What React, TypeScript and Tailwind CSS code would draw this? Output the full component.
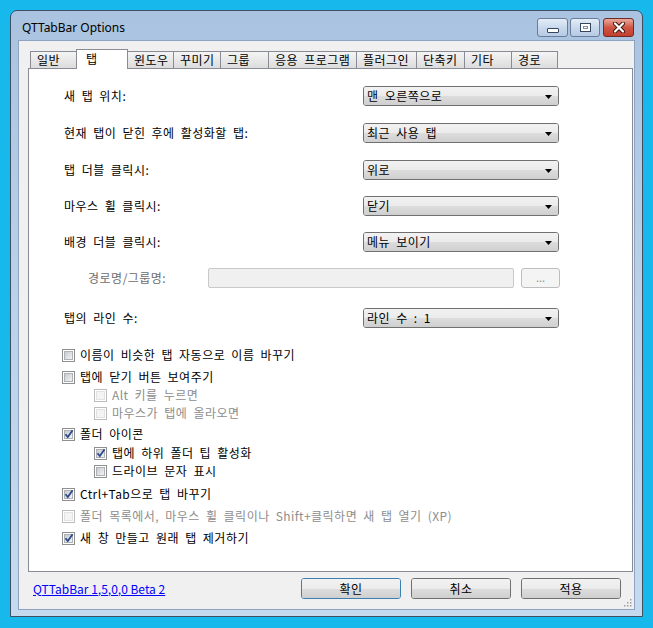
import React from "react"

const FONT = { fontFamily: '"Noto Sans CJK KR", "Noto Sans", sans-serif' }

const tabs: [string, number][] = [
  ["일반", 47],
  ["탭", 52],
  ["윈도우", 47],
  ["꾸미기", 48],
  ["그룹", 49],
  ["응용 프로그램", 89],
  ["플러그인", 61],
  ["단축키", 49],
  ["기타", 48],
  ["경로", 47],
]

// Gulim-like spacing: hangul runs get a little tracking, ascii runs keep wide spaces
function K({ text }: { text: string }) {
  const parts = text.split(/([\x00-\x7f]+)/).filter((p) => p !== "")
  return (
    <>
      {parts.map((p, i) =>
        /^[\x00-\x7f]+$/.test(p) ? (
          <span key={i} className="tracking-[0.4px]" style={{ wordSpacing: "3px" }}>
            {p}
          </span>
        ) : (
          <span key={i} className="tracking-[0.5px]">
            {p}
          </span>
        )
      )}
    </>
  )
}

function Combo({ value }: { value: string }) {
  return (
    <div className="relative flex h-[20px] w-[196px] items-center overflow-hidden rounded-[3px] border border-[#707070] pl-[3px] text-[12px] leading-none text-black">
      <div className="absolute inset-0 flex flex-col">
        <div className="flex-1 bg-gradient-to-b from-[#f2f2f2] to-[#ebebeb]" />
        <div className="flex-1 bg-gradient-to-b from-[#dddddd] to-[#cfcfcf]" />
      </div>
      <span className="relative">
        <K text={value} />
      </span>
      <svg className="absolute right-[6px] top-[8px]" width="7" height="4" viewBox="0 0 7 4">
        <path d="M0 0H7L3.5 4Z" fill="#000" />
      </svg>
    </div>
  )
}

function SettingRow({ label, value, mt }: { label: string; value: string; mt: string }) {
  return (
    <div className={`flex h-[20px] items-center pl-[35px] ${mt}`}>
      <div className="w-[299px] text-[12px] text-black">
        <K text={label} />
      </div>
      <Combo value={value} />
    </div>
  )
}

function Check({
  label,
  checked = false,
  disabled = false,
  indent = false,
  mt,
}: {
  label: string
  checked?: boolean
  disabled?: boolean
  indent?: boolean
  mt: string
}) {
  return (
    <div className={`flex h-[18px] items-center gap-[5px] ${indent ? "pl-[65px]" : "pl-[33px]"} ${mt}`}>
      <div
        className={`flex h-[13px] w-[13px] items-center justify-center border bg-white ${
          disabled ? "border-[#bcbcbc]" : "border-[#8f8f8f]"
        }`}
      >
        <div
          className={`relative h-[9px] w-[9px] ${
            disabled
              ? "bg-[#f4f4f4] border border-[#e2e2e2]"
              : "border border-[#aeb2b7] bg-gradient-to-br from-[#c9cbcf] to-[#f3f3f3]"
          }`}
        >
          {checked && (
            <svg className="absolute -left-[1px] -top-[2px]" width="10" height="10" viewBox="0 0 10 10">
              <path d="M1.5 5.2L3.8 8L8.6 1.2" stroke="#2c4a8c" strokeWidth="1.8" fill="none" />
            </svg>
          )}
        </div>
      </div>
      <span className={`whitespace-nowrap text-[12px] ${disabled ? "text-[#8d8d8d]" : "text-black"}`}>
        <K text={label} />
      </span>
    </div>
  )
}

function WinButton({ label, primary = false }: { label: string; primary?: boolean }) {
  return (
    <div
      className={`relative flex h-[21px] w-[100px] items-center justify-center overflow-hidden rounded-[3px] border text-[12px] text-black ${
        primary ? "border-[#3c7fb1]" : "border-[#707070]"
      }`}
    >
      <div className="absolute inset-0 flex flex-col">
        <div className="flex-1 bg-gradient-to-b from-[#f2f2f2] to-[#ebebeb]" />
        <div className="flex-1 bg-gradient-to-b from-[#dddddd] to-[#cfcfcf]" />
      </div>
      <span className="relative">
        <K text={label} />
      </span>
    </div>
  )
}

export default function App() {
  return (
    <div className="h-[628px] w-[653px] bg-[#17b8ec] pl-[10px] pt-[10px]" style={FONT}>
      <div className="flex h-[607px] w-[633px] flex-col rounded-t-[7px] border border-[#3f4e61] bg-gradient-to-b from-[#a9c3e0] via-[#bcd2ea] to-[#c6daef] px-[7px] pb-[6px]">
        {/* title bar */}
        <div className="flex h-[29px] items-start justify-between">
          <div
            className="pl-[4px] pt-[9px] text-[12px] leading-[16px] text-black"
            style={{ fontFamily: '"Noto Sans", "Open Sans", sans-serif' }}
          >
            QTTabBar Options
          </div>
          <div className="mr-[1px] flex pt-[7px]">
            <div className="flex h-[19px] w-[31px] items-center justify-center rounded-[3px] border border-[#6a7d98] bg-gradient-to-b from-[#e4edf7] via-[#c9d9ec] to-[#b5cae4]">
              <div className="mt-[5px] h-[5px] w-[12px] rounded-[1px] border border-[#35465e] bg-white" />
            </div>
            <div className="ml-[2px] flex h-[19px] w-[30px] items-center justify-center rounded-[3px] border border-[#6a7d98] bg-gradient-to-b from-[#e4edf7] via-[#c9d9ec] to-[#b5cae4]">
              <div className="flex h-[9px] w-[11px] items-center justify-center border border-[#35465e] bg-white">
                <div className="h-[3px] w-[5px] border border-[#7d8ca3]" />
              </div>
            </div>
            <div className="ml-[3px] flex h-[19px] w-[31px] items-center justify-center rounded-[3px] border border-[#6d2b23] bg-gradient-to-b from-[#e8a89c] via-[#cf5544] to-[#c13f2c]">
              <svg width="14" height="11" viewBox="0 0 14 11">
                <path d="M3 1.5L11 9.5M11 1.5L3 9.5" stroke="#3c1410" strokeWidth="4" strokeLinecap="round" />
                <path d="M3 1.5L11 9.5M11 1.5L3 9.5" stroke="#ffffff" strokeWidth="2.2" strokeLinecap="round" />
              </svg>
            </div>
          </div>
        </div>

        {/* client area */}
        <div className="relative flex h-[570px] flex-col border border-[#8ea3bf] bg-[#f0f0f0] pl-[9px] pt-[8px]">
          {/* tab strip */}
          <div className="flex h-[19px] items-end pl-[2px]">
            {tabs.map(([name, w], i) =>
              i === 1 ? (
                <div
                  key={name}
                  className="relative z-10 -mb-[1px] -ml-[1px] h-[20px] border border-b-0 border-[#898c95] bg-white pl-[9px] pt-[1px] text-[12px] leading-[16px] text-black"
                  style={{ width: w }}
                >
                  <K text={name} />
                </div>
              ) : (
                <div
                  key={name}
                  className={`h-[17px] whitespace-nowrap border border-b-0 border-[#898c95] bg-gradient-to-b from-[#f4f4f4] to-[#dcdcdc] pl-[6px] text-[12px] leading-[16px] text-black ${
                    i === 0 ? "" : "-ml-[1px]"
                  }`}
                  style={{ width: w }}
                >
                  <K text={name} />
                </div>
              )
            )}
          </div>

          {/* panel */}
          <div className="flex h-[504px] w-[605px] flex-col border border-[#898c95] bg-white pt-[17px]">
            <SettingRow label="새 탭 위치:" value="맨 오른쪽으로" mt="" />
            <SettingRow label="현재 탭이 닫힌 후에 활성화할 탭:" value="최근 사용 탭" mt="mt-[17px]" />
            <SettingRow label="탭 더블 클릭시:" value="위로" mt="mt-[17px]" />
            <SettingRow label="마우스 휠 클릭시:" value="닫기" mt="mt-[16px]" />
            <SettingRow label="배경 더블 클릭시:" value="메뉴 보이기" mt="mt-[16px]" />

            <div className="mt-[16px] flex h-[20px] items-center pl-[35px]">
              <div className="w-[144px] pl-[24px] text-[12px] text-[#6d6d6d]">
                <K text="경로명/그룹명:" />
              </div>
              <div className="h-[20px] w-[306px] rounded-[2px] border border-[#c9c9c9] bg-[#f0f0f0]" />
              <div className="ml-[7px] flex h-[20px] w-[39px] items-center justify-center rounded-[3px] border border-[#bdbdbd] bg-[#f4f4f4] pb-[2px] text-[11px] text-[#8d8d8d]">
                ...
              </div>
            </div>

            <SettingRow label="탭의 라인 수:" value="라인 수 : 1" mt="mt-[20px]" />

            <Check label="이름이 비슷한 탭 자동으로 이름 바꾸기" mt="mt-[18px]" />
            <Check label="탭에 닫기 버튼 보여주기" mt="mt-[4px]" />
            <Check label="Alt 키를 누르면" indent disabled mt="" />
            <Check label="마우스가 탭에 올라오면" indent disabled mt="" />
            <Check label="폴더 아이콘" checked mt="mt-[3px]" />
            <Check label="탭에 하위 폴더 팁 활성화" checked indent mt="mt-[1px]" />
            <Check label="드라이브 문자 표시" indent mt="" />
            <Check label="Ctrl+Tab으로 탭 바꾸기" checked mt="mt-[5px]" />
            <Check
              label="폴더 목록에서, 마우스 휠 클릭이나 Shift+클릭하면 새 탭 열기 (XP)"
              disabled
              mt="mt-[4px]"
            />
            <Check label="새 창 만들고 원래 탭 제거하기" checked mt="mt-[4px]" />
          </div>

          {/* bottom row */}
          <div className="mt-[6px] flex w-[605px] items-center">
            <a href="#" className="ml-[5px] text-[12px] text-[#0000ff] underline">
              QTTabBar 1,5,0,0 Beta 2
            </a>
            <div className="ml-auto mr-[12px] flex gap-[10px]">
              <WinButton label="확인" primary />
              <WinButton label="취소" />
              <WinButton label="적용" />
            </div>
          </div>

          <svg className="absolute bottom-[2px] right-[2px]" width="10" height="10" viewBox="0 0 10 10">
            {[
              [8, 2],
              [5, 5],
              [8, 5],
              [2, 8],
              [5, 8],
              [8, 8],
            ].map(([x, y]) => (
              <rect key={`${x}-${y}`} x={x} y={y} width="1.5" height="1.5" fill="#a0a0a0" />
            ))}
          </svg>
        </div>
      </div>
    </div>
  )
}
